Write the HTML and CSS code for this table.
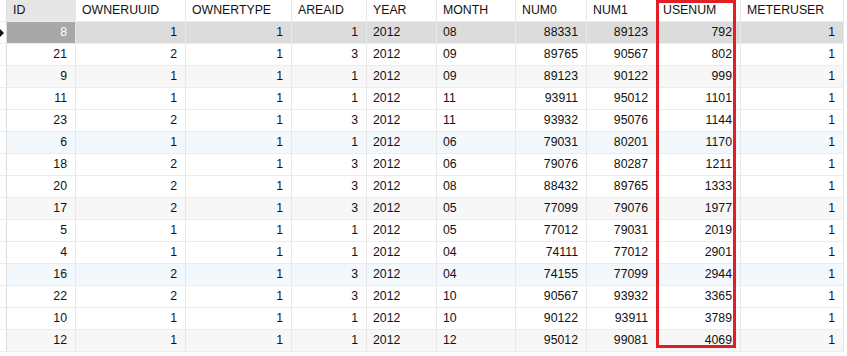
FILE: index.html
```html
<!doctype html>
<html lang="en">
  <head>
    <meta charset="UTF-8" />
    <title>METER table</title>
    <link rel="stylesheet" href="styles.css">
  </head>
  <body>
    <div class="grid-wrap">
      <div class="row head">
        <div class="gutter"></div>
        <div class="cell active-col">ID</div>
        <div class="cell">OWNERUUID</div>
        <div class="cell">OWNERTYPE</div>
        <div class="cell">AREAID</div>
        <div class="cell">YEAR</div>
        <div class="cell">MONTH</div>
        <div class="cell">NUM0</div>
        <div class="cell">NUM1</div>
        <div class="cell">USENUM</div>
        <div class="cell">METERUSER</div>
      </div>
      <div id="rows"></div>
      <div class="mark-box"></div>
    </div>

    <script>
      const data = [
        [8, 1, 1, 1, "2012", "08", 88331, 89123, 792, 1],
        [21, 2, 1, 3, "2012", "09", 89765, 90567, 802, 1],
        [9, 1, 1, 1, "2012", "09", 89123, 90122, 999, 1],
        [11, 1, 1, 1, "2012", "11", 93911, 95012, 1101, 1],
        [23, 2, 1, 3, "2012", "11", 93932, 95076, 1144, 1],
        [6, 1, 1, 1, "2012", "06", 79031, 80201, 1170, 1],
        [18, 2, 1, 3, "2012", "06", 79076, 80287, 1211, 1],
        [20, 2, 1, 3, "2012", "08", 88432, 89765, 1333, 1],
        [17, 2, 1, 3, "2012", "05", 77099, 79076, 1977, 1],
        [5, 1, 1, 1, "2012", "05", 77012, 79031, 2019, 1],
        [4, 1, 1, 1, "2012", "04", 74111, 77012, 2901, 1],
        [16, 2, 1, 3, "2012", "04", 74155, 77099, 2944, 1],
        [22, 2, 1, 3, "2012", "10", 90567, 93932, 3365, 1],
        [10, 1, 1, 1, "2012", "10", 90122, 93911, 3789, 1],
        [12, 1, 1, 1, "2012", "12", 95012, 99081, 4069, 1],
      ];

      // YEAR and MONTH are text columns, the rest are numbers
      const textCols = [4, 5];
      const rows = document.getElementById("rows");

      data.forEach((rec, i) => {
        const row = document.createElement("div");
        row.className = "row";
        if (i === 0) row.classList.add("selected");
        else if (i % 3 === 2) row.classList.add(i % 6 === 2 ? "tint" : "hover");

        const gutter = document.createElement("div");
        gutter.className = "gutter";
        if (i === 0) gutter.innerHTML = '<span class="pointer"></span>';
        row.appendChild(gutter);

        rec.forEach((val, c) => {
          const cell = document.createElement("div");
          cell.className = textCols.includes(c) ? "cell" : "cell num";
          if (c === 0 && i === 0) cell.classList.add("current");
          cell.textContent = val;
          row.appendChild(cell);
        });
        rows.appendChild(row);
      });
    </script>
  </body>
</html>
```

FILE: styles.css
```css
* {
  margin: 0;
  padding: 0;
  box-sizing: border-box;
}

body {
  font-family: "Liberation Sans", Arial, sans-serif;
  font-size: 12.3px;
  color: #111;
  background: #fff;
  width: 847px;
  height: 356px;
  overflow: hidden;
}

.grid-wrap {
  position: relative;
  width: 844px;
}

.row {
  display: grid;
  grid-template-columns: 7px 69px 110px 106px 75px 70px 79px 71px 70px 84px 103px;
  height: 22px;
  background: #fff;
}

.row.tint {
  background: #f7f7f7;
}

.row.hover {
  background: #f3f8fd;
}

.row.selected {
  background: #dcdcdc;
}

.gutter {
  position: relative;
  border-right: 1px solid #dcdcdc;
  border-bottom: 1px solid #ececec;
  background: #fff;
}

.pointer {
  position: absolute;
  left: 0;
  top: 7px;
  width: 0;
  height: 0;
  border-top: 4px solid transparent;
  border-bottom: 4px solid transparent;
  border-left: 4px solid #111;
}

.cell {
  border-right: 1px solid #e8e8e8;
  border-bottom: 1px solid #ececec;
  padding: 0 6px;
  line-height: 21px;
  white-space: nowrap;
  overflow: hidden;
}

.cell.num {
  text-align: right;
  padding-right: 8px;
}

.head .active-col {
  background: #e6e6e6;
}

.cell.current {
  background: #a8a8a8;
  color: #fff;
}

.mark-box {
  position: absolute;
  left: 656px;
  top: 0;
  width: 80px;
  height: 348px;
  border: 3px solid #e21f26;
  pointer-events: none;
}
```
